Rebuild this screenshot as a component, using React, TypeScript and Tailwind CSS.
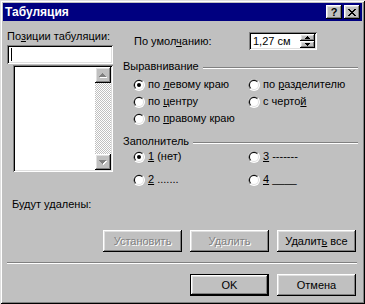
import type { ReactNode } from 'react'

const raised =
  'shadow-[inset_-1px_-1px_#000,inset_1px_1px_#fff,inset_-2px_-2px_#808080,inset_2px_2px_#dfdfdf]'
const sunken =
  'shadow-[inset_1px_1px_#808080,inset_-1px_-1px_#fff,inset_2px_2px_#000,inset_-2px_-2px_#dfdfdf]'

function Radio({ checked }: { checked?: boolean }) {
  return (
    <svg width="12" height="12" viewBox="0 0 12 12" className="shrink-0">
      <circle cx="6" cy="6" r="6" fill="#fff" />
      <path d="M1.76 10.24A6 6 0 0 1 10.24 1.76Z" fill="#808080" />
      <circle cx="6" cy="6" r="5" fill="#dfdfdf" />
      <path d="M2.46 9.54A5 5 0 0 1 9.54 2.46Z" fill="#000" />
      <circle cx="6" cy="6" r="4" fill="#fff" />
      {checked && <circle cx="6" cy="6" r="2" fill="#000" />}
    </svg>
  )
}

function Option({ checked, children }: { checked?: boolean; children: ReactNode }) {
  return (
    <div className="h-[17px] flex items-center gap-[3px] whitespace-nowrap">
      <Radio checked={checked} />
      <span>{children}</span>
    </div>
  )
}

function GroupHeader({ label, className = '' }: { label: string; className?: string }) {
  return (
    <div className={`flex items-start h-[13px] ${className}`}>
      <span>{label}</span>
      <div className="ml-[4px] mt-[7px] flex-1 border-t border-t-[#808080] border-b border-b-white" />
    </div>
  )
}

function Button({
  children,
  disabled,
  isDefault,
}: {
  children: ReactNode
  disabled?: boolean
  isDefault?: boolean
}) {
  const face = (
    <div
      className={`h-full w-full flex items-center justify-center ${raised} ${
        disabled ? 'text-[#808080] [text-shadow:1px_1px_#fff]' : ''
      }`}
    >
      {children}
    </div>
  )
  if (isDefault) {
    return <div className="w-[79px] h-[22px] border border-black">{face}</div>
  }
  return <div className="w-[79px] h-[22px]">{face}</div>
}

// disabled scroll arrow, pixel drawn
function ScrollArrow({ down }: { down?: boolean }) {
  const rows = down ? [[0, 6], [1, 5], [2, 4], [3, 3]] : [[3, 3], [2, 4], [1, 5], [0, 6]]
  return (
    <div className={`h-[16px] w-[16px] bg-[#c0c0c0] ${raised} flex items-center justify-center`}>
      <svg width="8" height="5" viewBox="0 0 8 5" shapeRendering="crispEdges">
        {rows.map(([a, b], i) => (
          <rect key={'w' + i} x={a + 1} y={i + 1} width={b - a + 1} height="1" fill="#fff" />
        ))}
        {rows.map(([a, b], i) => (
          <rect key={'g' + i} x={a} y={i} width={b - a + 1} height="1" fill="#808080" />
        ))}
      </svg>
    </div>
  )
}

function SpinArrow({ down }: { down?: boolean }) {
  const rows = down ? [[0, 4], [1, 3], [2, 2]] : [[2, 2], [1, 3], [0, 4]]
  return (
    <div className={`h-[7px] w-[15px] bg-[#c0c0c0] ${raised} flex items-center justify-center`}>
      <svg width="5" height="3" viewBox="0 0 5 3" shapeRendering="crispEdges">
        {rows.map(([a, b], i) => (
          <rect key={i} x={a} y={i} width={b - a + 1} height="1" fill="#000" />
        ))}
      </svg>
    </div>
  )
}

function TitleBar() {
  return (
    <div className="h-[18px] bg-[#000080] flex items-center pl-[2px] pr-[2px] shrink-0">
      <span className="text-white font-bold text-[12px]">Табуляция</span>
      <div className="ml-auto flex gap-[2px]">
        <div className={`w-[16px] h-[14px] bg-[#c0c0c0] ${raised} flex items-center justify-center`}>
          <span className="font-bold text-[11px] leading-[11px] mt-[1px]">?</span>
        </div>
        <div className={`w-[16px] h-[14px] bg-[#c0c0c0] ${raised} flex items-center justify-center`}>
          <svg width="8" height="7" viewBox="0 0 8 7" shapeRendering="crispEdges">
            {[0, 1, 2, 3, 4, 5, 6].map((i) => (
              <g key={i}>
                <rect x={i} y={i} width="2" height="1" fill="#000" />
                <rect x={6 - i} y={i} width="2" height="1" fill="#000" />
              </g>
            ))}
          </svg>
        </div>
      </div>
    </div>
  )
}

export default function App() {
  return (
    <div className="w-[365px] h-[304px] p-[3px] bg-[#c0c0c0] text-black text-[11px] leading-[13px] font-['Liberation_Sans',Arial,sans-serif] shadow-[inset_1px_1px_#dfdfdf,inset_-1px_-1px_#000,inset_2px_2px_#fff,inset_-2px_-2px_#808080] flex flex-col">
      <TitleBar />

      <div className="flex items-start">
        {/* tab stop list */}
        <div className="ml-[4px] mt-[9px] w-[106px] flex flex-col">
          <span className="whitespace-nowrap">
            По<u>з</u>иции табуляции:
          </span>
          <div className={`mt-[2px] h-[19px] bg-white ${sunken} flex items-center pl-[4px]`}>
            <div className="w-[1px] h-[13px] bg-black" />
          </div>
          <div className={`ml-[6px] mt-[1px] w-[100px] h-[107px] bg-white ${sunken} p-[2px] flex justify-end`}>
            <div className="w-[16px] h-full flex flex-col">
              <ScrollArrow />
              <div className="flex-1 bg-[repeating-conic-gradient(#fff_0_25%,#c0c0c0_0_50%)] bg-[length:2px_2px]" />
              <ScrollArrow down />
            </div>
          </div>
        </div>

        <div className="ml-[10px] mt-[11px] w-[235px] flex flex-col">
          <div className="h-[18px] flex items-center">
            <span className="ml-[11px] w-[115px] whitespace-nowrap">
              По умол<u>ч</u>анию:
            </span>
            <div className={`w-[68px] h-[18px] bg-white ${sunken} flex items-center pl-[4px] pr-[2px]`}>
              <span className="flex-1">1,27 см</span>
              <div className="flex flex-col">
                <SpinArrow />
                <SpinArrow down />
              </div>
            </div>
          </div>

          <GroupHeader label="Выравнивание" className="mt-[10px]" />
          <div className="mt-[3px] pl-[10px] grid grid-cols-[115px_auto]">
            <Option checked>
              по <u>л</u>евому краю
            </Option>
            <Option>
              по <u>р</u>азделителю
            </Option>
            <Option>
              по <u>ц</u>ентру
            </Option>
            <Option>
              с черто<u>й</u>
            </Option>
            <Option>
              по <u>п</u>равому краю
            </Option>
          </div>

          <GroupHeader label="Заполнитель" className="mt-[8px]" />
          <div className="pl-[10px] grid grid-cols-[115px_auto] gap-y-[6px]">
            <Option checked>
              <u>1</u> (нет)
            </Option>
            <Option>
              <u>3</u> -------
            </Option>
            <Option>
              <u>2</u> .......
            </Option>
            <Option>
              <u>4</u> ____
            </Option>
          </div>
        </div>
      </div>

      <div className="ml-[9px] mt-[10px]">Будут удалены:</div>

      <div className="mt-[19px] pr-[6px] flex justify-end gap-[8px]">
        <Button disabled>Установить</Button>
        <Button disabled>Удалить</Button>
        <Button>
          <span>
            Удалит<u>ь</u> все
          </span>
        </Button>
      </div>

      <div className="mt-[10px] ml-[4px] mr-[5px] border-t border-t-[#808080] border-b border-b-white" />

      <div className="mt-[10px] pr-[6px] flex justify-end gap-[8px]">
        <Button isDefault>OK</Button>
        <Button>Отмена</Button>
      </div>
    </div>
  )
}
